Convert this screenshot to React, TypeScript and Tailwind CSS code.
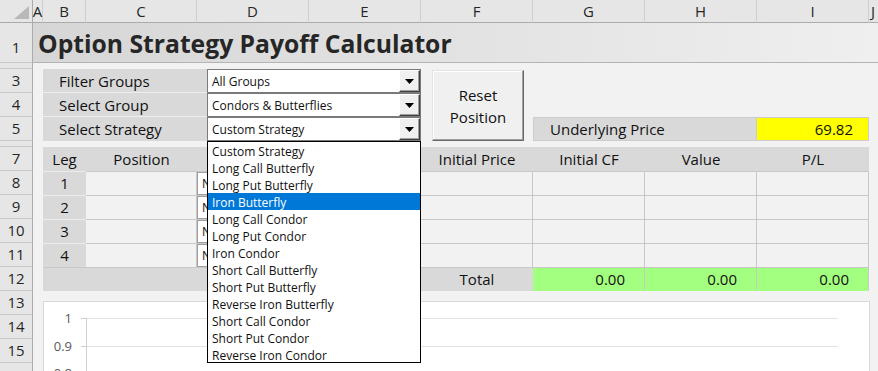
import React from "react";

function Tri() {
  return (
    <svg width="9" height="5" viewBox="0 0 9 5" className="block">
      <polygon points="0,0 9,0 4.5,5" fill="#000" />
    </svg>
  );
}

function Combo({ text }: { text: string }) {
  return (
    <div className="flex-1 flex items-stretch bg-white border border-[#7a7a7a] min-w-0">
      <div className="flex-1 flex items-center pl-[4px] pt-px text-[12px] whitespace-nowrap overflow-hidden">
        {text}
      </div>
      <div className="w-[21px] bg-[#f0f0f0] flex items-center justify-center border-t border-l border-t-white border-l-white border-r border-b border-r-[#404040] border-b-[#404040] shadow-[inset_-1px_-1px_0_#a0a0a0]">
        <Tri />
      </div>
    </div>
  );
}

const items = [
  "Custom Strategy",
  "Long Call Butterfly",
  "Long Put Butterfly",
  "Iron Butterfly",
  "Long Call Condor",
  "Long Put Condor",
  "Iron Condor",
  "Short Call Butterfly",
  "Short Put Butterfly",
  "Reverse Iron Butterfly",
  "Short Call Condor",
  "Short Put Condor",
  "Reverse Iron Condor",
];

const hdr =
  "row-start-1 flex items-center justify-center bg-[#e6e6e6] border-r border-b border-r-[#cfcfcf] border-b-[#ababab] text-[15px] text-[#262626]";
const rh =
  "col-start-1 flex items-center justify-center bg-[#e6e6e6] border-r border-b border-r-[#ababab] border-b-[#c8c8c8] text-[15px] text-[#262626]";
const cell = "border-t border-r border-[#c8c8c8]";

export default function App() {
  return (
    <div className="relative w-[878px] h-[371px] overflow-hidden bg-[#f2f2f2] font-['Open_Sans',sans-serif] text-[15px] text-[#111]">
      <div className="grid grid-cols-[33px_10px_43px_111px_112px_112px_112px_112px_112px_112px_1fr] grid-rows-[23px_40px_6px_24px_24px_24px_6px_24px_24px_24px_24px_24px_24px_24px_24px_24px_24px]">
        {/* column headers */}
        <div className="row-start-1 col-start-1 bg-[#e6e6e6] border-r border-b border-r-[#ababab] border-b-[#ababab] flex items-end justify-end pr-[3px] pb-[3px]">
          <svg width="15" height="13" viewBox="0 0 15 13">
            <polygon points="15,0 15,13 0,13" fill="#b8b8b8" />
          </svg>
        </div>
        <div className={`${hdr} col-start-2`}>A</div>
        <div className={`${hdr} col-start-3`}>B</div>
        <div className={`${hdr} col-start-4`}>C</div>
        <div className={`${hdr} col-start-5`}>D</div>
        <div className={`${hdr} col-start-6`}>E</div>
        <div className={`${hdr} col-start-7`}>F</div>
        <div className={`${hdr} col-start-8`}>G</div>
        <div className={`${hdr} col-start-9`}>H</div>
        <div className={`${hdr} col-start-10`}>I</div>
        <div className={`${hdr} col-start-11 justify-start pl-[2px] border-r-0`}>J</div>

        {/* row headers */}
        <div className={`${rh} row-start-2 items-end pb-[4px]`}>1</div>
        <div className={`${rh} row-start-3`}></div>
        <div className={`${rh} row-start-4`}>3</div>
        <div className={`${rh} row-start-5`}>4</div>
        <div className={`${rh} row-start-6`}>5</div>
        <div className={`${rh} row-start-7`}></div>
        <div className={`${rh} row-start-8`}>7</div>
        <div className={`${rh} row-start-9`}>8</div>
        <div className={`${rh} row-start-10`}>9</div>
        <div className={`${rh} row-start-11`}>10</div>
        <div className={`${rh} row-start-12`}>11</div>
        <div className={`${rh} row-start-13`}>12</div>
        <div className={`${rh} row-start-14`}>13</div>
        <div className={`${rh} row-start-15`}>14</div>
        <div className={`${rh} row-start-16`}>15</div>
        <div className={`${rh} row-start-17 items-start pt-[1px]`}>16</div>

        {/* title */}
        <div className="row-start-2 col-start-2 col-span-10 flex items-end pl-[5px] bg-linear-to-r from-[#d6d6d6] to-[#efefef] border-b border-[#b4b4b4]">
          <span className="text-[24.7px] font-bold text-[#262626] whitespace-nowrap leading-normal">
            Option Strategy Payoff Calculator
          </span>
        </div>

        {/* rows 3-5: labels + combos */}
        <div className="row-start-4 col-start-3 col-span-4 flex">
          <div className="w-[164px] bg-[#d9d9d9] border-b border-[#eeeeee] flex items-center pl-[16px] pt-px">Filter Groups</div>
          <Combo text="All Groups" />
        </div>
        <div className="row-start-5 col-start-3 col-span-4 flex">
          <div className="w-[164px] bg-[#d9d9d9] border-b border-[#eeeeee] flex items-center pl-[16px] pt-px">Select Group</div>
          <Combo text="Condors & Butterflies" />
        </div>
        <div className="row-start-6 col-start-3 col-span-4 flex">
          <div className="w-[164px] bg-[#d9d9d9] flex items-center pl-[16px] pt-px">Select Strategy</div>
          <Combo text="Custom Strategy" />
        </div>

        {/* reset button */}
        <div className="row-start-4 row-span-3 col-start-7 ml-[11px] mr-[9px] mt-px flex flex-col items-center justify-center bg-[#f0f0f0] border border-t-[#e3e3e3] border-l-[#e3e3e3] border-r-[#696969] border-b-[#696969] shadow-[inset_-1px_-1px_0_#a0a0a0,inset_1px_1px_0_#ffffff] leading-[22px] text-[15px]">
          <span>Reset</span>
          <span>Position</span>
        </div>

        {/* underlying price */}
        <div className="row-start-6 col-start-8 col-span-2 bg-[#d9d9d9] border border-[#cccccc] flex items-center pl-[16px] pt-px">
          Underlying Price
        </div>
        <div className="row-start-6 col-start-10 bg-[#ffff00] border-t border-r border-b border-[#cccccc] flex items-center justify-end pr-[15px] pt-px">
          69.82
        </div>

        {/* table header row 7 */}
        <div className="row-start-8 col-start-3 bg-[#d9d9d9] flex items-center justify-center">Leg</div>
        <div className="row-start-8 col-start-4 bg-[#d9d9d9] flex items-center justify-center">Position</div>
        <div className="row-start-8 col-start-5 col-span-2 bg-[#d9d9d9]"></div>
        <div className="row-start-8 col-start-7 bg-[#d9d9d9] flex items-center justify-center">Initial Price</div>
        <div className="row-start-8 col-start-8 bg-[#d9d9d9] flex items-center justify-center">Initial CF</div>
        <div className="row-start-8 col-start-9 bg-[#d9d9d9] flex items-center justify-center">Value</div>
        <div className="row-start-8 col-start-10 bg-[#d9d9d9] flex items-center justify-center">P/L</div>

        {/* rows 8-11 */}
        {[
          { n: "1", r: "row-start-9" },
          { n: "2", r: "row-start-10" },
          { n: "3", r: "row-start-11" },
          { n: "4", r: "row-start-12" },
        ].map(({ n, r }) => (
          <React.Fragment key={n}>
            <div className={`${r} col-start-3 bg-[#d9d9d9] border-t border-[#ececec] flex items-center justify-center`}>{n}</div>
            <div className={`${r} col-start-4 ${cell}`}></div>
            <div className={`${r} col-start-5 col-span-2 border-t border-[#c8c8c8] flex`}>
              <div className="flex-1 bg-white border border-[#a0a0a0] flex items-center pl-[4px] text-[12px] pt-px">
                <span className="w-[6px] overflow-hidden whitespace-nowrap">N</span>
              </div>
            </div>
            <div className={`${r} col-start-7 ${cell}`}></div>
            <div className={`${r} col-start-8 ${cell}`}></div>
            <div className={`${r} col-start-9 ${cell}`}></div>
            <div className={`${r} col-start-10 ${cell}`}></div>
          </React.Fragment>
        ))}

        {/* row 12 totals */}
        <div className="row-start-13 col-start-3 col-span-4 bg-[#d9d9d9] border-t border-[#c8c8c8]"></div>
        <div className="row-start-13 col-start-7 bg-[#d9d9d9] border-t border-[#c8c8c8] flex items-center justify-center">Total</div>
        <div className="row-start-13 col-start-8 bg-[#a3ff80] border-t border-r border-[#c8c8c8] flex items-center justify-end pr-[19px]">0.00</div>
        <div className="row-start-13 col-start-9 bg-[#a3ff80] border-t border-r border-[#c8c8c8] flex items-center justify-end pr-[19px]">0.00</div>
        <div className="row-start-13 col-start-10 bg-[#a3ff80] border-t border-r border-[#c8c8c8] flex items-center justify-end pr-[19px]">0.00</div>

        {/* chart */}
        <div className="row-start-14 row-span-4 col-start-3 col-span-8 mt-[10px] mr-[-1px] bg-white border border-[#d9d9d9] overflow-hidden">
          <svg width="826" height="90" viewBox="0 0 826 90" className="block">
            <g stroke="#e3e3e3" strokeWidth="1">
              <line x1="42" y1="16.5" x2="794" y2="16.5" />
              <line x1="42" y1="44.5" x2="794" y2="44.5" />
              <line x1="42" y1="71.5" x2="794" y2="71.5" />
            </g>
            <g stroke="#d0d0d0" strokeWidth="1">
              <line x1="42.5" y1="16" x2="42.5" y2="90" />
              <line x1="37" y1="16.5" x2="42" y2="16.5" />
              <line x1="37" y1="44.5" x2="42" y2="44.5" />
              <line x1="37" y1="71.5" x2="42" y2="71.5" />
            </g>
            <g fill="#595959" fontSize="13" fontFamily="Open Sans, sans-serif" textAnchor="end">
              <text x="28" y="20.5">1</text>
              <text x="28" y="48.5">0.9</text>
              <text x="28" y="75.5">0.8</text>
            </g>
          </svg>
        </div>
      </div>

      {/* dropdown list overlay */}
      <div className="absolute left-[207px] top-[141px] w-[214px] h-[222px] bg-white border border-black">
        {items.map((t, i) => (
          <div
            key={t}
            className={`h-[17px] leading-[19px] pl-[4px] text-[12px] whitespace-nowrap ${
              i === 3 ? "bg-[#0078d7] text-white" : "text-[#111]"
            }`}
          >
            {t}
          </div>
        ))}
      </div>
    </div>
  );
}
